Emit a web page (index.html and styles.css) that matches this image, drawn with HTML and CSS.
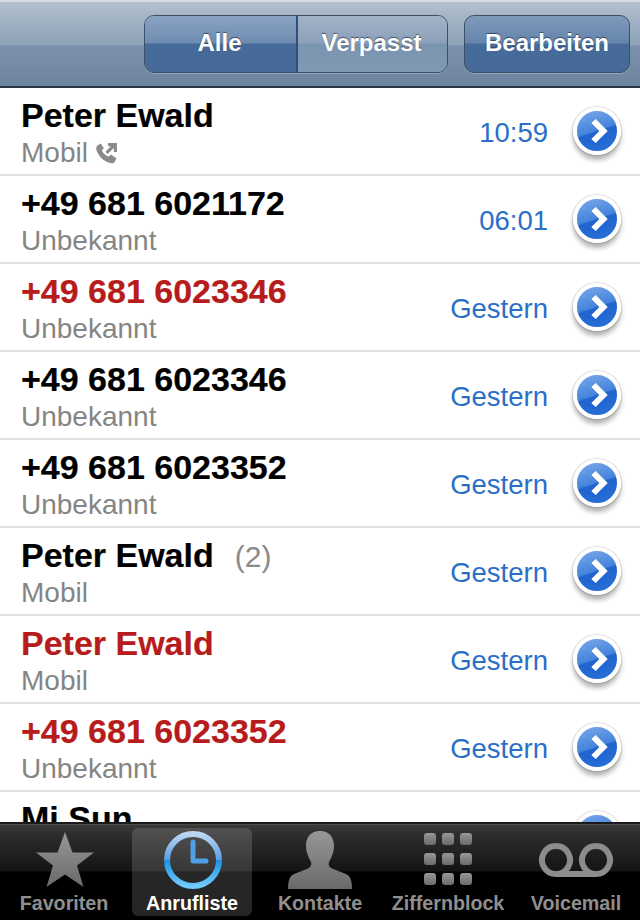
FILE: index.html
```html
<!DOCTYPE html>
<html lang="de">
<head>
<meta charset="utf-8">
<title>Anrufliste</title>
<link rel="stylesheet" href="styles.css">
</head>
<body>
<div class="app">
  <header class="nav">
    <div class="seg">
      <div class="seg-item seg-on">Alle</div>
      <div class="seg-item seg-off">Verpasst</div>
    </div>
    <div class="edit">Bearbeiten</div>
  </header>
  <main class="list">
    <div class="row"><div class="who"><div class="name">Peter Ewald</div><div class="sub">Mobil <svg class="callicon" viewBox="0 0 22 22"><path d="M2 3.500 5.500 1.500 8.500 6 6.500 8C7.500 10.500 10 13 13 14L15 12 20.500 15.500 18.500 19.500C17 21 14 20.500 11 19 6.500 16.500 3.500 13 1.700 8.500 1 6.500 1 5 2 3.500Z"/><path class="arrow" d="M11 10.500 18.500 3M12.500 2.500H19.500V9.500"/></svg></div></div><div class="when">10:59</div><div class="disc"><svg viewBox="0 0 20 26"><path d="M3.500 3 13.500 13 3.500 23"/></svg></div></div>
    <div class="row"><div class="who"><div class="name">+49 681 6021172</div><div class="sub">Unbekannt</div></div><div class="when">06:01</div><div class="disc"><svg viewBox="0 0 20 26"><path d="M3.500 3 13.500 13 3.500 23"/></svg></div></div>
    <div class="row"><div class="who"><div class="name missed">+49 681 6023346</div><div class="sub">Unbekannt</div></div><div class="when">Gestern</div><div class="disc"><svg viewBox="0 0 20 26"><path d="M3.500 3 13.500 13 3.500 23"/></svg></div></div>
    <div class="row"><div class="who"><div class="name">+49 681 6023346</div><div class="sub">Unbekannt</div></div><div class="when">Gestern</div><div class="disc"><svg viewBox="0 0 20 26"><path d="M3.500 3 13.500 13 3.500 23"/></svg></div></div>
    <div class="row"><div class="who"><div class="name">+49 681 6023352</div><div class="sub">Unbekannt</div></div><div class="when">Gestern</div><div class="disc"><svg viewBox="0 0 20 26"><path d="M3.500 3 13.500 13 3.500 23"/></svg></div></div>
    <div class="row"><div class="who"><div class="name">Peter Ewald<span class="count">(2)</span></div><div class="sub">Mobil</div></div><div class="when">Gestern</div><div class="disc"><svg viewBox="0 0 20 26"><path d="M3.500 3 13.500 13 3.500 23"/></svg></div></div>
    <div class="row"><div class="who"><div class="name missed">Peter Ewald</div><div class="sub">Mobil</div></div><div class="when">Gestern</div><div class="disc"><svg viewBox="0 0 20 26"><path d="M3.500 3 13.500 13 3.500 23"/></svg></div></div>
    <div class="row"><div class="who"><div class="name missed">+49 681 6023352</div><div class="sub">Unbekannt</div></div><div class="when">Gestern</div><div class="disc"><svg viewBox="0 0 20 26"><path d="M3.500 3 13.500 13 3.500 23"/></svg></div></div>
    <div class="row row-cut"><div class="who"><div class="name">Mi Sun</div></div><div class="disc"><svg viewBox="0 0 20 26"><path d="M3.500 3 13.500 13 3.500 23"/></svg></div></div>
  </main>
  <nav class="tabs">
    <div class="tab">
      <svg class="ticon" viewBox="0 0 64 64"><defs><linearGradient id="g" x1="0" y1="0" x2="0" y2="1"><stop offset="0" stop-color="#979797"/><stop offset="1" stop-color="#6a6a6a"/></linearGradient></defs><path fill="url(#g)" d="M33 4 40.500 24.500H62L45 37.500 51.500 59 33 46.500 14.500 59 21 37.500 4 24.500H25.500Z"/></svg>
      <span class="tlabel">Favoriten</span>
    </div>
    <div class="tab tab-on">
      <svg class="ticon" viewBox="0 0 64 64"><defs><linearGradient id="c" x1="0" y1="0" x2="0" y2="1"><stop offset="0" stop-color="#bcd6f2"/><stop offset=".49" stop-color="#5a9fe2"/><stop offset=".5" stop-color="#1a90e4"/><stop offset="1" stop-color="#6fcbfa"/></linearGradient></defs><circle cx="33" cy="32" r="26" fill="none" stroke="url(#c)" stroke-width="6"/><path fill="none" stroke="#4f9fe8" stroke-width="5" stroke-linejoin="round" stroke-linecap="round" d="M33 14V33H46"/></svg>
      <span class="tlabel">Anrufliste</span>
    </div>
    <div class="tab">
      <svg class="ticon" viewBox="0 0 64 64"><path fill="url(#g)" d="M32 3C42 3 46 10 46 18 46 24 44 28 41.500 33 40 36 40.500 38.500 44 40.500L58 46C62 47.500 64 52 64 61H0C0 52 2 47.500 6 46L20 40.500C23.500 38.500 24 36 22.500 33 20 28 18 24 18 18 18 10 22 3 32 3Z"/></svg>
      <span class="tlabel">Kontakte</span>
    </div>
    <div class="tab">
      <svg class="ticon" viewBox="0 0 64 64"><g fill="url(#g)"><rect x="8" y="5" width="12" height="12" rx="3"/><rect x="26" y="5" width="12" height="12" rx="3"/><rect x="44" y="5" width="12" height="12" rx="3"/><rect x="8" y="25" width="12" height="12" rx="3"/><rect x="26" y="25" width="12" height="12" rx="3"/><rect x="44" y="25" width="12" height="12" rx="3"/><rect x="8" y="45" width="12" height="12" rx="3"/><rect x="26" y="45" width="12" height="12" rx="3"/><rect x="44" y="45" width="12" height="12" rx="3"/></g></svg>
      <span class="tlabel">Ziffernblock</span>
    </div>
    <div class="tab">
      <svg class="ticon ticon-wide" viewBox="0 0 76 64"><path fill="none" stroke="#8c8c8c" stroke-width="6" d="M18 46H58M18 46A14 14 0 1 1 18.010 46M58 46A14 14 0 1 0 57.990 46"/></svg>
      <span class="tlabel">Voicemail</span>
    </div>
  </nav>
</div>
</body>
</html>
```
FILE: styles.css
```css
* { box-sizing: border-box; }
html, body { margin: 0; padding: 0; }
body { font-family: "Liberation Sans", Arial, sans-serif; background: #fff; }
.app { width: 640px; height: 920px; display: flex; flex-direction: column; overflow: hidden; }

.nav {
  height: 88px; flex: none; display: flex; justify-content: flex-end; align-items: flex-start;
  gap: 16px; padding: 14px 10px 0 0;
  background: linear-gradient(#b3c1cf 0, #a5b5c6 14px, #8ea2b8 43px, #7b91ab 44px, #6d84a0 85px);
  border-top: 2px solid #d6dde4; border-bottom: 2px solid #2b3542;
}
.seg, .edit {
  height: 58px; margin-top: -1px; border: 1.500px solid #3b4f69; border-radius: 10px;
  box-shadow: 0 1px 0 rgba(255,255,255,.25);
  color: #fff; font-weight: bold; font-size: 24px; text-shadow: 0 -1px 1px rgba(30,45,70,.7);
}
.seg { display: flex; width: 304px; overflow: hidden; }
.seg-item { display: flex; align-items: center; justify-content: center; padding-bottom: 2px; }
.seg-on {
  width: 153px; padding-right: 2px; border-right: 2px solid #2e5078;
  background: linear-gradient(#8aa3c2 0, #6e8cb1 27px, #466b9a 28px, #456a98 100%);
}
.seg-off { flex: 1; padding-right: 2px; background: linear-gradient(#a3b3c7 0, #8ba0b9 27px, #7b95b0 28px, #7f98b3 100%); }
.edit {
  width: 166px; display: flex; align-items: center; justify-content: center; padding-bottom: 2px;
  background: linear-gradient(#7e99bb 0, #6585ac 27px, #466b9a 28px, #456a98 100%);
}

.list { flex: 1; min-height: 0; overflow: hidden; }
.row {
  height: 88px; display: flex; align-items: center; padding: 0 19px 0 21px;
  border-bottom: 2px solid #e0e0e0; background: #fff;
}
.row-cut .who { align-self: flex-start; padding-top: 7px; }
.who { flex: 1; min-width: 0; }
.name { font-size: 34px; font-weight: bold; line-height: 38px; color: #000; white-space: nowrap; height: 38px; -webkit-text-stroke: .2px currentColor; }
.name.missed { color: #b71c1c; }
.count { font-weight: normal; font-size: 30px; color: #8a8a8a; margin-left: 21px; -webkit-text-stroke: 0; }
.sub { font-size: 28px; line-height: 34px; height: 34px; margin-top: 1px; margin-bottom: -3px; padding-top: 2px; color: #858585; display: flex; align-items: center; gap: 7px; }
.callicon { width: 23px; height: 23px; fill: #8a8a8a; }
.callicon .arrow { fill: none; stroke: #8a8a8a; stroke-width: 3; }
.when { font-size: 27.500px; color: #2a6fc9; margin-right: 25px; margin-top: 3px; }
.disc {
  position: relative; width: 48px; height: 48px; flex: none; border-radius: 50%;
  display: flex; align-items: center; justify-content: center;
  border: 4px solid #fff;
  background: linear-gradient(162deg, #7aaaea 0, #4684dc 48%, #1f64cf 52%, #2a70d8 100%);
  box-shadow: 0 0 2px rgba(0,0,0,.4), 0 5px 5px rgba(0,0,0,.3);
}
.disc svg { width: 20px; height: 26px; fill: none; stroke: #fff; stroke-width: 6; margin-left: 5px; }

.tabs {
  height: 98px; flex: none; display: grid; grid-template-columns: repeat(5, 128px);
  padding: 4px 0; position: relative;
  border-top: 2px solid #1a1a1a; box-shadow: inset 0 1px 0 #4a4a4a;
  background: linear-gradient(#3a3a3a 0, #2c2c2c 12px, #141414 47px, #000 48px);
}
.tab { margin: 0 4px; display: flex; flex-direction: column; align-items: center; border-radius: 6px; }
.tab-on { background: rgba(255,255,255,.15); }
.ticon { width: 64px; height: 64px; flex: none; }
.ticon-wide { width: 76px; }
.tlabel { font-size: 19.700px; font-weight: bold; color: #8f8f8f; line-height: 22px; white-space: nowrap; }
.tab-on .tlabel { color: #fff; }
```
